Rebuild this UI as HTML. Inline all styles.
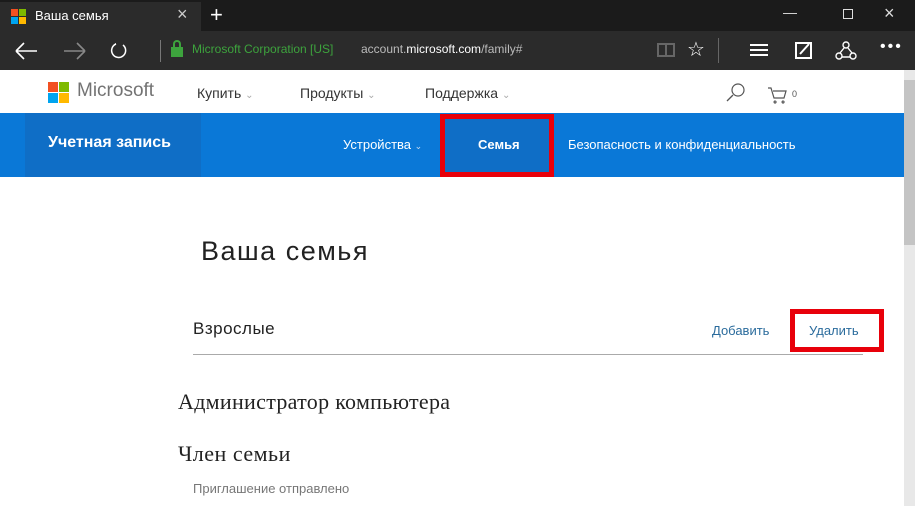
<!DOCTYPE html>
<html><head><meta charset="utf-8"><style>
*{margin:0;padding:0;box-sizing:border-box}
body{width:915px;height:506px;overflow:hidden;background:#fff;font-family:"Liberation Sans","DejaVu Sans",sans-serif;position:relative}
.a{position:absolute;white-space:nowrap}
</style></head><body>
<div class="a" style="left:0;top:0;width:915px;height:31px;background:#1b1b1b"></div>
<div class="a" style="left:0;top:2px;width:201px;height:29px;background:#2b2b2b"></div>
<div class="a" style="left:11px;top:9px;width:7px;height:7px;background:#f25022"></div>
<div class="a" style="left:19px;top:9px;width:7px;height:7px;background:#7fba00"></div>
<div class="a" style="left:11px;top:17px;width:7px;height:7px;background:#00a4ef"></div>
<div class="a" style="left:19px;top:17px;width:7px;height:7px;background:#ffb900"></div>
<div class="a" style="left:35px;top:8px;color:#fff;font-size:13px">Ваша семья</div>
<div class="a" style="left:177px;top:4px;color:#ccc;font-size:18px">×</div>
<div class="a" style="left:210px;top:2px;color:#fff;font-size:22px">+</div>
<div class="a" style="left:783px;top:4px;color:#ddd;font-size:14px">—</div>
<div class="a" style="left:843px;top:9px;width:10px;height:10px;border:1px solid #ddd"></div>
<div class="a" style="left:884px;top:3px;color:#ddd;font-size:18px">×</div>
<div class="a" style="left:0;top:31px;width:915px;height:39px;background:#2b2b2b"></div>
<svg class="a" style="left:12px;top:38px" width="130" height="26" viewBox="0 0 130 26"><g stroke="#fff" stroke-width="1.6" fill="none"><path d="M4 13H25M4 13l8-8M4 13l8 8"/></g><g stroke="#888" stroke-width="1.6" fill="none"><path d="M52 13H73M73 13l-8-8M73 13l-8 8"/></g><g stroke="#fff" stroke-width="1.5" fill="none"><path d="M104 6a7 7 0 1 0 7 1"/><path d="M104 6l-1 0"/></g></svg>
<div class="a" style="left:160px;top:40px;width:1px;height:22px;background:#777"></div>
<div class="a" style="left:171px;top:47px;width:12px;height:10px;background:#3da33d"></div>
<div class="a" style="left:173px;top:40px;width:8px;height:9px;border:2px solid #3da33d;border-bottom:none;border-radius:4px 4px 0 0"></div>
<div class="a" style="left:192px;top:42px;color:#3da33d;font-size:12px">Microsoft Corporation [US]</div>
<div class="a" style="left:361px;top:42px;color:#bbb;font-size:12px">account.<b style="color:#fff;font-weight:normal">microsoft.com</b>/family#</div>
<div class="a" style="left:657px;top:43px;width:18px;height:14px;border:2px solid #666"></div>
<div class="a" style="left:665px;top:43px;width:2px;height:14px;background:#666"></div>
<div class="a" style="left:687px;top:37px;color:#fff;font-size:20px">☆</div>
<div class="a" style="left:718px;top:38px;width:1px;height:25px;background:#666"></div>
<div class="a" style="left:750px;top:44px;width:18px;height:2px;background:#fff;box-shadow:0 5px 0 #fff,0 10px 0 #fff"></div>
<svg class="a" style="left:794px;top:40px" width="80" height="22"><rect x="2" y="3" width="15" height="15" stroke="#fff" stroke-width="2" fill="none"/><path d="M6 14l9-10" stroke="#fff" stroke-width="2"/><g stroke="#fff" stroke-width="1.4" fill="none"><circle cx="52" cy="5" r="3"/><circle cx="45" cy="16" r="3"/><circle cx="59" cy="16" r="3"/><path d="M50 8l-4 5M54 8l4 5M48 17h8"/></g></svg>
<div class="a" style="left:880px;top:38px;color:#fff;font-size:16px;letter-spacing:2px">•••</div>
<!-- ms header -->
<div class="a" style="left:48px;top:82px;width:10px;height:10px;background:#f25022"></div>
<div class="a" style="left:59px;top:82px;width:10px;height:10px;background:#7fba00"></div>
<div class="a" style="left:48px;top:93px;width:10px;height:10px;background:#00a4ef"></div>
<div class="a" style="left:59px;top:93px;width:10px;height:10px;background:#ffb900"></div>
<div class="a" style="left:77px;top:80px;color:#737373;font-size:19px">Microsoft</div>
<div class="a" style="left:197px;top:85px;color:#333;font-size:14px">Купить <span style="color:#aaa;font-size:10px">⌄</span></div>
<div class="a" style="left:300px;top:85px;color:#333;font-size:14px">Продукты <span style="color:#aaa;font-size:10px">⌄</span></div>
<div class="a" style="left:425px;top:85px;color:#333;font-size:14px">Поддержка <span style="color:#aaa;font-size:10px">⌄</span></div>
<svg class="a" style="left:722px;top:80px" width="80" height="26"><circle cx="16" cy="10" r="6" stroke="#555" fill="none" stroke-width="1.2"/><path d="M11 15l-6 6" stroke="#555" stroke-width="1.3"/><path d="M46 8h3l3 10h10l2-7H51M53 21a1 1 0 1 0 .1 0M61 21a1 1 0 1 0 .1 0" stroke="#555" fill="none" stroke-width="1.2"/><text x="70" y="17" font-size="9" fill="#555" font-family="Liberation Sans">0</text></svg>
<!-- blue bar -->
<div class="a" style="left:0;top:113px;width:904px;height:64px;background:#0a78d7"></div>
<div class="a" style="left:25px;top:113px;width:176px;height:64px;background:#0f6ec6"></div>
<div class="a" style="left:48px;top:134px;color:#fff;font-size:16px;font-weight:bold">Учетная запись</div>
<div class="a" style="left:343px;top:137px;color:#fff;font-size:13px">Устройства <span style="font-size:9px;color:#cde">⌄</span></div>
<div class="a" style="left:440px;top:114px;width:114px;height:63px;background:#0f6ec6;border:5px solid #e8000a"></div>
<div class="a" style="left:478px;top:137px;color:#fff;font-size:13px;font-weight:bold">Семья</div>
<div class="a" style="left:568px;top:137px;color:#fff;font-size:13px">Безопасность и конфиденциальность</div>
<!-- scrollbar -->
<div class="a" style="left:904px;top:70px;width:11px;height:436px;background:#e8e8e8"></div>
<div class="a" style="left:904px;top:80px;width:11px;height:165px;background:#c4c4c4"></div>
<!-- content -->
<div class="a" style="left:201px;top:236px;color:#222;font-size:27px;letter-spacing:1.5px">Ваша семья</div>
<div class="a" style="left:193px;top:319px;color:#222;font-size:17px;letter-spacing:0.5px">Взрослые</div>
<div class="a" style="left:193px;top:354px;width:670px;height:1px;background:#aaa"></div>
<div class="a" style="left:712px;top:323px;color:#2a6b9c;font-size:13px">Добавить</div>
<div class="a" style="left:790px;top:309px;width:94px;height:43px;border:5px solid #e8000a"></div>
<div class="a" style="left:809px;top:323px;color:#2a6b9c;font-size:13px">Удалить</div>
<div class="a" style="left:178px;top:389px;color:#222;font-size:22px;font-family:'Liberation Serif',serif;letter-spacing:0.3px">Администратор компьютера</div>
<div class="a" style="left:178px;top:441px;color:#222;font-size:22px;font-family:'Liberation Serif',serif;letter-spacing:0.5px">Член семьи</div>
<div class="a" style="left:193px;top:481px;color:#777;font-size:13px">Приглашение отправлено</div>
</body></html>
